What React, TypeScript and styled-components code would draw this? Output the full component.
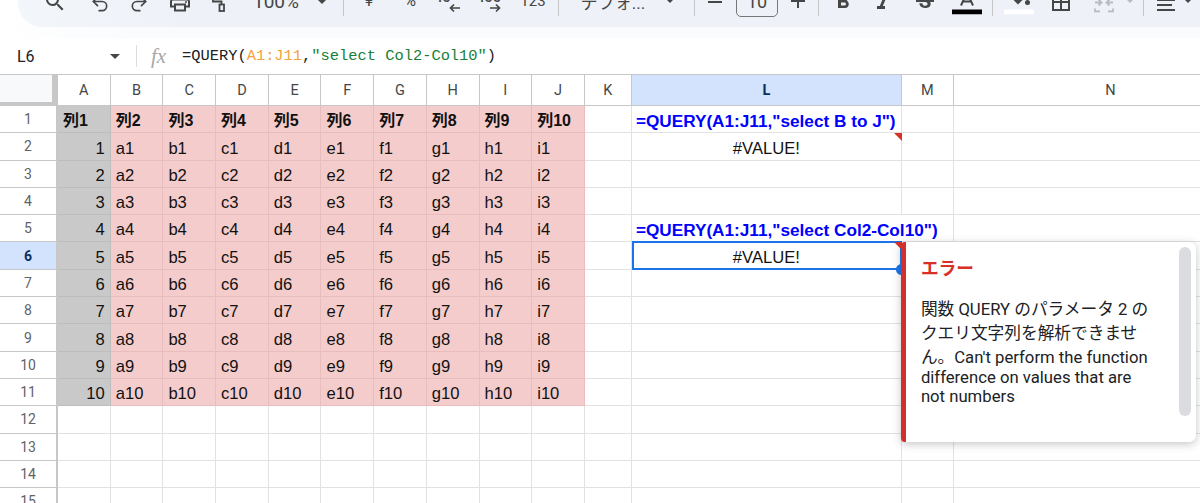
import React from "react";
import styled, { createGlobalStyle } from "styled-components";
import {
  MdAdd,
  MdFormatBold,
  MdFormatItalic,
  MdOutlineBorderAll,
  MdOutlinePrint,
  MdRemove,
  MdSearch,
  MdStrikethroughS,
} from "react-icons/md";
import { Redo2, Undo2 } from "lucide-react";

const columns = ["A", "B", "C", "D", "E", "F", "G", "H", "I", "J", "K", "L", "M", "N"];
const letters = ["a", "b", "c", "d", "e", "f", "g", "h", "i"];

const RollerIcon = () => (
  <svg width="14" height="13" viewBox="0 0 14 13" fill="none" stroke="#444746" strokeWidth="1.8">
    <path d="M1 0V2.5H9.5V5.5" />
    <rect x="7.5" y="5.5" width="4.5" height="6.5" />
  </svg>
);

const TextColorIcon = () => (
  <svg width="30" height="20" viewBox="0 0 30 20">
    <path d="M9 11L14 0h2l5 11M11 7h8" fill="none" stroke="#444746" strokeWidth="2" />
    <rect x="0" y="15" width="30" height="5" fill="#000" />
  </svg>
);

const FillColorIcon = () => (
  <svg width="30" height="20" viewBox="0 0 30 20">
    <path d="M8 4L14 10L20 4Z" fill="#444746" />
    <circle cx="23.5" cy="8" r="2.5" fill="#444746" />
    <rect x="0" y="15" width="30" height="5" fill="#fff" />
  </svg>
);

const MergeIcon = () => (
  <svg width="20" height="14" viewBox="0 0 20 14" fill="none" stroke="#b8bbbf" strokeWidth="1.8">
    <path d="M1 10v3h5M19 10v3h-5M1 4h6M4.5 1l3 3-3 3M19 4h-6M15.5 1l-3 3 3 3" />
  </svg>
);

const AlignIcon = () => (
  <svg width="18" height="13" viewBox="0 0 18 13" stroke="#444746" strokeWidth="2">
    <path d="M0 1.5H18M0 6.5H15M0 11.5H18" />
  </svg>
);

const ArrowLeft = () => (
  <svg width="11" height="10" viewBox="0 0 11 10" fill="none" stroke="#444746" strokeWidth="1.7">
    <path d="M11 5H1.5M5 1.5L1.5 5 5 8.5" />
  </svg>
);

const ArrowRight = () => (
  <svg width="11" height="10" viewBox="0 0 11 10" fill="none" stroke="#444746" strokeWidth="1.7">
    <path d="M0 5H9.5M6 1.5L9.5 5 6 8.5" />
  </svg>
);

const GlobalStyle = createGlobalStyle`
  html, body {
    margin: 0;
    height: 503px;
    overflow: hidden;
    background: #fff;
  }
`;

const Page = styled.div`
  width: 1200px;
  height: 503px;
  overflow: hidden;
  font-family: "Roboto", "Noto Sans CJK JP", sans-serif;
`;

const TopBand = styled.div`
  height: 38px;
  padding-left: 18px;
  box-sizing: border-box;
  background: linear-gradient(90deg, #fff 0%, #f9fbfd 12%);
`;

const Toolbar = styled.div`
  height: 27px;
  overflow: hidden;
  background: linear-gradient(90deg, #f3f6fb 0%, #eef1f7 14%);
  border-bottom-left-radius: 24px;
`;

const ToolRow = styled.div`
  display: flex;
  align-items: center;
  height: 40px;
  margin-top: -18.5px;
`;

const Tool = styled.div<{ $gap: number; $w: number; $dy?: number }>`
  display: flex;
  flex: none;
  align-items: center;
  justify-content: center;
  width: ${(p) => p.$w}px;
  margin-left: ${(p) => p.$gap}px;
  transform: translateY(${(p) => p.$dy || 0}px);
  color: #444746;
`;

const ToolText = styled.span<{ $size: number }>`
  font-size: ${(p) => p.$size}px;
  white-space: nowrap;
  color: #444746;
`;

const Divider = styled.div`
  width: 1px;
  height: 28px;
  background: #c7c7c7;
`;

const Caret = styled.div<{ $muted?: boolean }>`
  width: 0;
  height: 0;
  border-left: 5px solid transparent;
  border-right: 5px solid transparent;
  border-top: 5px solid ${(p) => (p.$muted ? "#b8bbbf" : "#444746")};
`;

const SizeBox = styled.div`
  display: flex;
  align-items: center;
  justify-content: center;
  width: 42px;
  height: 30px;
  box-sizing: border-box;
  border: 1px solid #747775;
  border-radius: 5px;
  font-size: 18px;
  color: #444746;
`;

const Decimal = styled.div<{ $flip?: boolean }>`
  display: flex;
  flex-direction: column;
  align-items: flex-start;
  width: 100%;
  font-size: 15px;
  font-weight: 500;
  line-height: 12px;
  color: #444746;
  svg {
    align-self: flex-end;
    margin-right: ${(p) => (p.$flip ? 1 : 0)}px;
  }
`;

const FormulaBar = styled.div`
  display: flex;
  align-items: center;
  height: 37px;
  box-sizing: border-box;
  border-bottom: 1px solid #c7c7c7;
`;

const NameBox = styled.div`
  display: flex;
  align-items: center;
  justify-content: space-between;
  width: 103px;
  margin-left: 17px;
  font-size: 16px;
  color: #202124;
`;

const NameCaret = styled.div`
  width: 0;
  height: 0;
  border-left: 5px solid transparent;
  border-right: 5px solid transparent;
  border-top: 5px solid #444746;
`;

const BarDivider = styled.div`
  width: 1px;
  height: 22px;
  margin: 0 14px 0 16px;
  background: #dadce0;
`;

const FxLabel = styled.span`
  width: 31px;
  font-family: "Liberation Serif", serif;
  font-style: italic;
  font-size: 21px;
  color: #a8a8a8;
`;

const Formula = styled.div`
  font-family: "Liberation Mono", monospace;
  font-size: 15.4px;
  color: #202124;
  white-space: pre;
`;

const RangeText = styled.span`
  color: #f2a33c;
`;

const StringText = styled.span`
  color: #188038;
`;

const Sheet = styled.div`
  display: grid;
  grid-template-columns: 58px repeat(10, 52.7px) 47px 270px 52px 314px;
  grid-template-rows: 31px repeat(15, 27.3px);
`;

const Corner = styled.div`
  box-sizing: border-box;
  background: #f8f9fa;
  border-right: 6px solid #c7c7c7;
  border-bottom: 4px solid #c7c7c7;
`;

const ColHead = styled.div<{ $active?: boolean }>`
  display: flex;
  align-items: center;
  justify-content: center;
  box-sizing: border-box;
  padding-top: 1px;
  border-right: 1px solid #c7c7c7;
  border-bottom: 1px solid #c7c7c7;
  font-size: 14.5px;
  font-weight: ${(p) => (p.$active ? 700 : 400)};
  color: ${(p) => (p.$active ? "#0b2f63" : "#444746")};
  background: ${(p) => (p.$active ? "#d3e3fd" : "#fff")};
`;

const RowHead = styled.div<{ $active?: boolean }>`
  display: flex;
  align-items: center;
  justify-content: center;
  box-sizing: border-box;
  border-right: 2px solid #c7c7c7;
  border-bottom: 1px solid #c7c7c7;
  font-size: 14px;
  font-weight: ${(p) => (p.$active ? 700 : 400)};
  color: ${(p) => (p.$active ? "#0b2f63" : "#5f6368")};
  background: ${(p) => (p.$active ? "#d3e3fd" : "#fff")};
`;

const toneBg = { grey: "#c9c9c9", pink: "#f4cccc", none: "#fff" };
const toneLine = { grey: "#bdbdbd", pink: "#e9bdbd", none: "#e1e3e3" };

type Tone = keyof typeof toneBg;

const Cell = styled.div<{ $tone?: Tone; $align?: string; $open?: boolean }>`
  position: relative;
  z-index: ${(p) => (p.$open ? 1 : "auto")};
  display: flex;
  align-items: flex-end;
  justify-content: ${(p) => p.$align || "flex-start"};
  box-sizing: border-box;
  padding: 0 5px 1px 5px;
  font-family: "Liberation Sans", "Noto Sans CJK JP", sans-serif;
  font-size: 16.6px;
  line-height: 20px;
  color: #111;
  white-space: nowrap;
  background: ${(p) => toneBg[p.$tone || "none"]};
  border-right: 1px solid ${(p) => (p.$open ? "transparent" : toneLine[p.$tone || "none"])};
  border-bottom: 1px solid ${(p) => toneLine[p.$tone || "none"]};
`;

const HeadText = styled.span`
  font-weight: 700;
  font-size: 16px;
`;

const QueryText = styled.span`
  margin-left: -1px;
  font-size: 17.2px;
  font-weight: 700;
  color: #0000ff;
`;

const ErrorMark = styled.div`
  position: absolute;
  top: 0;
  right: -1px;
  width: 0;
  height: 0;
  border-top: 8px solid #d93025;
  border-left: 8px solid transparent;
`;

const Selection = styled.div`
  position: absolute;
  inset: -1px -1px -1px 0;
  border: 2px solid #1a73e8;
`;

const FillHandle = styled.div`
  position: absolute;
  right: -6px;
  bottom: -6px;
  z-index: 3;
  width: 11px;
  height: 11px;
  border-radius: 50%;
  background: #1a73e8;
`;

const ErrorCard = styled.div`
  position: absolute;
  top: 0;
  left: 100%;
  z-index: 4;
  width: 295px;
  height: 200px;
  box-sizing: border-box;
  padding: 15px 40px 0 15px;
  background: #fff;
  border-left: 5px solid #d32f2f;
  border-radius: 4px 7px 7px 4px;
  box-shadow: 0 2px 8px rgba(60, 64, 67, 0.3);
  font-family: "Roboto", "Noto Sans CJK JP", sans-serif;
  white-space: normal;
`;

const ErrorTitle = styled.div`
  font-size: 17.7px;
  font-weight: 700;
  line-height: 24px;
  color: #d93025;
`;

const ErrorBody = styled.div`
  margin-top: 15px;
  font-size: 16.7px;
  line-height: normal;
  color: #202124;
`;

const ScrollThumb = styled.div`
  position: absolute;
  top: 5px;
  right: 5px;
  width: 12px;
  height: 169px;
  border-radius: 6px;
  background: #dadce0;
`;

const tools: { x: number; w: number; dy?: number; node: React.ReactNode }[] = [
  { x: 54.5, w: 24, node: <MdSearch size={24} /> },
  { x: 99.5, w: 20, dy: 2, node: <Undo2 size={20} strokeWidth={2} /> },
  { x: 138.5, w: 20, dy: 2, node: <Redo2 size={20} strokeWidth={2} /> },
  { x: 180, w: 24, dy: 0.5, node: <MdOutlinePrint size={24} /> },
  { x: 219, w: 14, dy: 4, node: <RollerIcon /> },
  { x: 276, w: 48, node: <ToolText $size={19}>100%</ToolText> },
  { x: 322, w: 10, node: <Caret /> },
  { x: 343.5, w: 1, node: <Divider /> },
  { x: 369, w: 12, dy: -1.5, node: <ToolText $size={16}>¥</ToolText> },
  { x: 410, w: 16, dy: -1, node: <ToolText $size={16}>%</ToolText> },
  {
    x: 449,
    w: 22,
    node: (
      <Decimal>
        .0
        <ArrowLeft />
      </Decimal>
    ),
  },
  {
    x: 491,
    w: 22,
    node: (
      <Decimal $flip>
        .00
        <ArrowRight />
      </Decimal>
    ),
  },
  { x: 533, w: 24, dy: -1, node: <ToolText $size={15}>123</ToolText> },
  { x: 558.5, w: 1, node: <Divider /> },
  { x: 613, w: 66, node: <ToolText $size={17}>デフォ...</ToolText> },
  { x: 670, w: 10, dy: -1, node: <Caret /> },
  { x: 694.5, w: 1, node: <Divider /> },
  { x: 715, w: 24, node: <MdRemove size={24} /> },
  { x: 757, w: 42, node: <SizeBox>10</SizeBox> },
  { x: 798, w: 24, dy: -1, node: <MdAdd size={24} /> },
  { x: 818.5, w: 1, node: <Divider /> },
  { x: 843, w: 24, node: <MdFormatBold size={24} /> },
  { x: 883, w: 24, dy: 1, node: <MdFormatItalic size={24} /> },
  { x: 925, w: 24, node: <MdStrikethroughS size={24} /> },
  { x: 967, w: 30, dy: 2.5, node: <TextColorIcon /> },
  { x: 992.5, w: 1, node: <Divider /> },
  { x: 1019, w: 30, dy: 2.5, node: <FillColorIcon /> },
  { x: 1061, w: 24, node: <MdOutlineBorderAll size={24} /> },
  { x: 1103.5, w: 20, dy: 3.5, node: <MergeIcon /> },
  { x: 1130, w: 10, dy: -1, node: <Caret $muted /> },
  { x: 1143.5, w: 1, node: <Divider /> },
  { x: 1166, w: 18, dy: 3.5, node: <AlignIcon /> },
  { x: 1188, w: 10, dy: -1, node: <Caret /> },
];

const ToolStrip = () => {
  let cursor = 18;
  return (
    <ToolRow>
      {tools.map((t) => {
        const gap = t.x - t.w / 2 - cursor;
        cursor = t.x + t.w / 2;
        return (
          <Tool key={t.x} $gap={gap} $w={t.w} $dy={t.dy}>
            {t.node}
          </Tool>
        );
      })}
    </ToolRow>
  );
};

const renderExtra = (row: number, col: string) => {
  if (col !== "L") return null;
  if (row === 1) return <QueryText>=QUERY(A1:J11,"select B to J")</QueryText>;
  if (row === 5) return <QueryText>=QUERY(A1:J11,"select Col2-Col10")</QueryText>;
  if (row === 2) return "#VALUE!";
  if (row === 6) return "#VALUE!";
  return null;
};

const renderCell = (row: number, col: string) => {
  const idx = columns.indexOf(col);
  const key = `${col}${row}`;
  if (idx <= 9 && row <= 11) {
    if (row === 1) {
      return (
        <Cell key={key} $tone={idx === 0 ? "grey" : "pink"}>
          <HeadText>列{idx + 1}</HeadText>
        </Cell>
      );
    }
    if (idx === 0) {
      return (
        <Cell key={key} $tone="grey" $align="flex-end">
          {row - 1}
        </Cell>
      );
    }
    return (
      <Cell key={key} $tone="pink">
        {letters[idx - 1]}
        {row - 1}
      </Cell>
    );
  }
  const centered = col === "L" && (row === 2 || row === 6);
  const raised = col === "L" && (row === 5 || row === 6);
  return (
    <Cell key={key} $align={centered ? "center" : undefined} $open={raised}>
      {renderExtra(row, col)}
      {col === "L" && row === 2 && <ErrorMark />}
      {col === "L" && row === 6 && (
        <>
          <Selection />
          <ErrorMark />
          <FillHandle />
          <ErrorCard>
            <ErrorTitle>エラー</ErrorTitle>
            <ErrorBody>
              関数 QUERY のパラメータ 2 のクエリ文字列を解析できません。Can't perform the function difference on values that are not numbers
            </ErrorBody>
            <ScrollThumb />
          </ErrorCard>
        </>
      )}
    </Cell>
  );
};

export default function App() {
  const rows = Array.from({ length: 15 }, (_, i) => i + 1);
  return (
    <Page>
      <GlobalStyle />
      <TopBand>
        <Toolbar>
          <ToolStrip />
        </Toolbar>
      </TopBand>
      <FormulaBar>
        <NameBox>
          L6
          <NameCaret />
        </NameBox>
        <BarDivider />
        <FxLabel>fx</FxLabel>
        <Formula>
          =QUERY(<RangeText>A1:J11</RangeText>,<StringText>"select Col2-Col10"</StringText>)
        </Formula>
      </FormulaBar>
      <Sheet>
        <Corner />
        {columns.map((c) => (
          <ColHead key={c} $active={c === "L"}>
            {c}
          </ColHead>
        ))}
        {rows.map((r) => (
          <React.Fragment key={r}>
            <RowHead $active={r === 6}>{r}</RowHead>
            {columns.map((c) => renderCell(r, c))}
          </React.Fragment>
        ))}
      </Sheet>
    </Page>
  );
}
